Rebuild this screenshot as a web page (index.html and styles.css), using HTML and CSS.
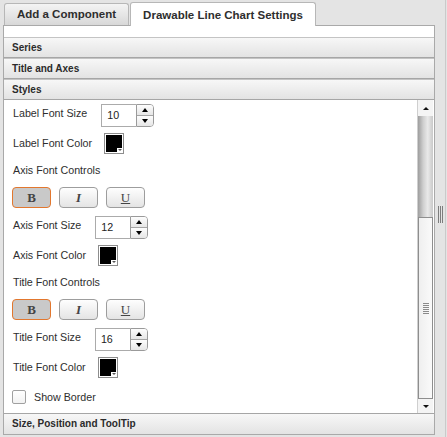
FILE: index.html
```html
<!DOCTYPE html>
<html lang="en">
<head>
  <meta charset="UTF-8" />
  <title>Drawable Line Chart Settings</title>
  <link rel="stylesheet" href="styles.css">
</head>
<body>
  <div class="app">
    <div class="main">
      <div class="tabs">
        <div class="tab">Add a Component</div>
        <div class="tab active">Drawable Line Chart Settings</div>
      </div>

      <div class="panel">
        <div class="section-head">Series</div>
        <div class="section-head">Title and Axes</div>
        <div class="section-head">Styles</div>

        <div class="section-body">
          <div class="fields">
            <div class="row spin-row first">
              <span class="label">Label Font Size</span>
              <div class="spinner">
                <input type="text" value="10" />
                <div class="spin-btns"><span class="up"></span><span class="down"></span></div>
              </div>
            </div>
            <div class="row color-row">
              <span class="label">Label Font Color</span>
              <div class="swatch"><span></span></div>
            </div>

            <div class="caption">Axis Font Controls</div>
            <div class="row fmt-row">
              <button class="fmt-btn bold on">B</button>
              <button class="fmt-btn italic">I</button>
              <button class="fmt-btn under">U</button>
            </div>
            <div class="row spin-row">
              <span class="label">Axis Font Size</span>
              <div class="spinner">
                <input type="text" value="12" />
                <div class="spin-btns"><span class="up"></span><span class="down"></span></div>
              </div>
            </div>
            <div class="row color-row">
              <span class="label">Axis Font Color</span>
              <div class="swatch"><span></span></div>
            </div>

            <div class="caption">Title Font Controls</div>
            <div class="row fmt-row">
              <button class="fmt-btn bold on">B</button>
              <button class="fmt-btn italic">I</button>
              <button class="fmt-btn under">U</button>
            </div>
            <div class="row spin-row">
              <span class="label">Title Font Size</span>
              <div class="spinner">
                <input type="text" value="16" />
                <div class="spin-btns"><span class="up"></span><span class="down"></span></div>
              </div>
            </div>
            <div class="row color-row">
              <span class="label">Title Font Color</span>
              <div class="swatch"><span></span></div>
            </div>

            <div class="row check-row">
              <span class="checkbox"></span>
              <span class="label">Show Border</span>
            </div>
          </div>

          <!-- scrollbar of the styles pane -->
          <div class="vscroll">
            <div class="sb-btn up"></div>
            <div class="sb-track"></div>
            <div class="sb-thumb"><span class="grip"></span></div>
            <div class="sb-btn down"></div>
          </div>
        </div>

        <div class="section-head last">Size, Position and ToolTip</div>
      </div>
    </div>

    <div class="splitter"><span class="grip"></span></div>
  </div>
</body>
</html>
```

FILE: styles.css
```css
body {
  margin: 0;
  background: #e4e4e4;
  font-family: "Liberation Sans", Arial, sans-serif;
  color: #333;
}

.app {
  display: flex;
  height: 437px;
}

.main {
  width: 432px;
  margin-left: 3px;
}

/* tabs */
.tabs {
  display: flex;
  align-items: flex-start;
  height: 25px;
  padding-left: 1px;
}

.tab {
  box-sizing: border-box;
  width: 125px;
  height: 22px;
  margin-top: 3px;
  border: 1px solid #b7b7b7;
  border-bottom: none;
  border-radius: 3px 3px 0 0;
  background: linear-gradient(#f4f4f4, #d8d8d8);
  font-size: 11.5px;
  font-weight: bold;
  line-height: 20px;
  text-align: center;
  color: #2e2e2e;
}

.tab.active {
  position: relative;
  z-index: 1;
  width: 186px;
  height: 24px;
  margin-top: 2px;
  margin-left: 1px;
  padding-top: 2px;
  background: #fff;
}

/* accordion */
.panel {
  border: 1px solid #a9a9a9;
  background: #fff;
  padding-top: 11px;
}

.section-head {
  box-sizing: border-box;
  height: 21px;
  padding-left: 8px;
  border-top: 1px solid #c4c4c4;
  border-bottom: 1px solid #a6a6a6;
  background: linear-gradient(#f7f7f7, #e3e3e3);
  font-size: 10px;
  font-weight: bold;
  line-height: 19px;
  color: #2b2b2b;
}

.section-head.last {
  border-top-color: #a6a6a6;
  border-bottom: none;
}

.section-body {
  display: flex;
  height: 313px;
}

.fields {
  flex: 1;
  padding: 3px 0 0 8px;
  font-size: 10.7px;
  color: #2e2e2e;
}

.row {
  display: flex;
  align-items: center;
}

.label {
  line-height: 14px;
  padding-left: 1px;
}

.spin-row {
  height: 24px;
  margin-top: 7px;
}

.spin-row.first {
  margin-top: 0;
}

.spin-row .label {
  padding-bottom: 4px;
}

.color-row {
  height: 21px;
  margin-top: 6px;
}

.color-row .label {
  padding-bottom: 2px;
}

.caption {
  height: 14px;
  line-height: 14px;
  margin-top: 9px;
  padding-left: 1px;
}

.fmt-row {
  height: 21px;
  margin-top: 10px;
  gap: 8px;
}

.check-row {
  height: 14px;
  margin-top: 12px;
}

/* spinner */
.spinner {
  display: flex;
  margin-left: 14px;
}

.spinner input {
  box-sizing: border-box;
  width: 35px;
  height: 23px;
  margin: 0;
  padding: 0 0 0 5px;
  border: 1px solid #ababab;
  border-right: none;
  font: 10.7px "Liberation Sans", Arial, sans-serif;
  color: #222;
  outline: none;
}

.spin-btns {
  box-sizing: border-box;
  width: 18px;
  height: 23px;
  border: 1px solid #9a9a9a;
  border-radius: 0 4px 4px 0;
  display: flex;
  flex-direction: column;
  overflow: hidden;
}

.spin-btns span {
  flex: 1;
  display: flex;
  align-items: center;
  justify-content: center;
  background: linear-gradient(#fdfdfd, #e6e6e6);
}

.spin-btns span + span {
  border-top: 1px solid #a5a5a5;
}

.spin-btns .up::before {
  content: "";
  border-left: 3px solid transparent;
  border-right: 3px solid transparent;
  border-bottom: 4px solid #000;
}

.spin-btns .down::before {
  content: "";
  border-left: 3px solid transparent;
  border-right: 3px solid transparent;
  border-top: 4px solid #000;
}

/* colour picker */
.swatch {
  position: relative;
  box-sizing: border-box;
  width: 20px;
  height: 21px;
  margin-left: 12px;
  border: 1px solid #8d8d8d;
  padding: 1px;
  background: #fff;
}

.swatch span {
  display: block;
  height: 100%;
  background: #000;
}

.swatch::before {
  content: "";
  position: absolute;
  right: 1px;
  bottom: 1px;
  width: 5px;
  height: 4px;
  background: #fff;
}

.swatch::after {
  content: "";
  position: absolute;
  right: 1px;
  bottom: 2px;
  border-left: 2px solid transparent;
  border-right: 2px solid transparent;
  border-top: 2px solid #555;
}

/* B I U */
.fmt-btn {
  box-sizing: border-box;
  width: 39px;
  height: 21px;
  margin: 0;
  padding: 0;
  border: 1px solid #9d9d9d;
  border-radius: 4px;
  background: linear-gradient(#fefefe, #e4e4e4);
  font-family: "Liberation Serif", "Times New Roman", serif;
  font-size: 13px;
  color: #444;
}

.fmt-btn.on {
  background: #c9c9c9;
  border-color: #e2772e;
}

.fmt-btn.bold {
  font-weight: bold;
}

.fmt-btn.italic {
  font-style: italic;
  font-weight: bold;
}

.fmt-btn.under {
  text-decoration: underline;
}

.checkbox {
  box-sizing: border-box;
  width: 14px;
  height: 14px;
  margin-right: 7px;
  border: 1px solid #a0a0a0;
  border-radius: 2px;
  background: linear-gradient(#fff, #f2f2f2);
}

/* scrollbar */
.vscroll {
  width: 15px;
  margin-right: 1px;
  display: flex;
  flex-direction: column;
  border-left: 1px solid #cfcfcf;
}

.sb-btn {
  height: 16px;
  background: #f4f4f4;
  display: flex;
  align-items: center;
  justify-content: center;
}

.sb-btn.down {
  height: 15px;
  border-top: 1px solid #8e8e8e;
  box-sizing: border-box;
}

.sb-btn.up::before {
  content: "";
  border-left: 3px solid transparent;
  border-right: 3px solid transparent;
  border-bottom: 3px solid #111;
}

.sb-btn.down::before {
  content: "";
  border-left: 3px solid transparent;
  border-right: 3px solid transparent;
  border-top: 3px solid #111;
}

.sb-track {
  height: 101px;
  background: linear-gradient(to right, #9e9e9e, #cfcfcf 35%, #e9e9e9 65%, #c9c9c9);
}

.sb-thumb {
  flex: 1;
  box-sizing: border-box;
  border: 1px solid #8e8e8e;
  border-bottom: none;
  background: linear-gradient(to right, #efefef, #fafafa);
  display: flex;
  align-items: center;
  justify-content: center;
}

.sb-thumb .grip {
  width: 6px;
  height: 11px;
  background: repeating-linear-gradient(#8a8a8a 0 1px, transparent 1px 2px);
}

/* splitter */
.splitter {
  flex: 1;
  display: flex;
  align-items: center;
  justify-content: center;
  border-right: 1px solid #cacaca;
  margin-right: 1px;
}

.splitter .grip {
  width: 5px;
  height: 17px;
  margin-bottom: 8px;
  background: repeating-linear-gradient(to right, #7d7d7d 0 1px, transparent 1px 2px);
}
```
